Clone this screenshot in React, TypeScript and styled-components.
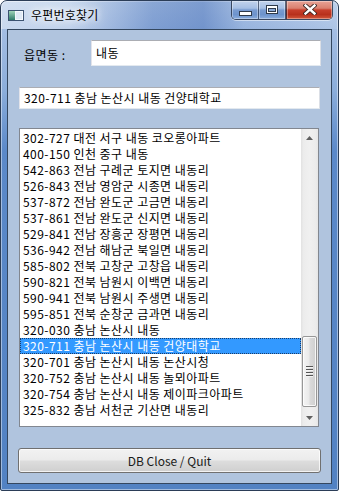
import React from 'react';
import styled, { createGlobalStyle } from 'styled-components';

const GlobalStyle = createGlobalStyle`
  html, body {
    margin: 0;
    padding: 0;
    background: #ffffff;
  }
  body {
    font-family: "Noto Sans CJK KR", "Noto Sans", sans-serif;
    font-size: 12px;
    color: #000;
  }
`;

const Window = styled.div`
  width: 339px;
  height: 491px;
  box-sizing: border-box;
  border: 1px solid #2b3d57;
  border-radius: 7px 7px 2px 2px;
  background: linear-gradient(180deg, #b5cbe8 0%, #a3bde3 30px, #8badda 90px, #5b89c9 150px, #5282c3 100%);
  box-shadow: inset 0 0 0 1px rgba(255, 255, 255, 0.45);
  display: flex;
  flex-direction: column;
  overflow: hidden;
`;

const TitleBar = styled.div`
  height: 28px;
  display: flex;
  align-items: flex-start;
  padding: 0 5px 0 7px;
  background: linear-gradient(90deg,
    rgba(255, 255, 255, 0.4) 0%,
    rgba(255, 255, 255, 0.3) 20%,
    rgba(40, 85, 170, 0.3) 45%,
    rgba(40, 85, 170, 0.4) 60%,
    rgba(80, 120, 190, 0.15) 72%,
    rgba(255, 255, 255, 0.1) 100%);
`;

const AppIcon = styled.svg`
  margin-top: 9px;
  flex: none;
`;

const Title = styled.span`
  margin: 5px 0 0 7px;
  line-height: 18px;
  font-size: 12px;
  letter-spacing: 0.2px;
  color: #000;
  text-shadow: 0 0 6px #fff, 0 0 10px #fff, 0 0 14px rgba(255, 255, 255, 0.9);
`;

const Spacer = styled.div`
  flex: 1;
`;

const CaptionGroup = styled.div`
  display: flex;
  height: 18px;
  border: 1px solid rgba(25, 35, 55, 0.75);
  border-top: none;
  border-radius: 0 0 5px 5px;
  overflow: hidden;
  box-shadow: 0 1px 0 rgba(255, 255, 255, 0.5);
`;

const CaptionButton = styled.div<{ $close?: boolean; $w: number }>`
  width: ${p => p.$w}px;
  height: 100%;
  display: flex;
  align-items: center;
  justify-content: center;
  box-sizing: border-box;
  border-left: ${p => (p.$close ? '1px solid rgba(25, 35, 55, 0.6)' : 'none')};
  border-right: ${p => (p.$close ? 'none' : '1px solid rgba(25, 35, 55, 0.6)')};
  box-shadow: inset 0 0 0 1px rgba(255, 255, 255, 0.35);
  background: ${p =>
    p.$close
      ? 'linear-gradient(180deg, #e8a396 0%, #d9806f 40%, #c73f2c 50%, #b8301c 75%, #d2583c 100%)'
      : 'linear-gradient(180deg, #c2d3ec 0%, #a6bfe4 40%, #789bd0 50%, #6d93cc 75%, #8aaddd 100%)'};
`;

const Client = styled.div`
  margin: 0 6px;
  height: 455px;
  box-sizing: border-box;
  border: 1px solid #34475f;
  background: #b0c4de;
  display: flex;
  flex-direction: column;
`;

const SearchRow = styled.div`
  display: flex;
  align-items: center;
  margin-top: 10px;
  height: 26px;
`;

const Label = styled.span`
  width: 83px;
  box-sizing: border-box;
  padding: 4px 0 0 16px;
  font-size: 12px;
  letter-spacing: 0.5px;
  line-height: 16px;
`;

const TextBox = styled.div<{ $w: number; $h: number }>`
  width: ${p => p.$w}px;
  height: ${p => p.$h}px;
  box-sizing: border-box;
  border: 1px solid;
  border-color: #abadb3 #dbdfe6 #e3e9ef #e2e3ea;
  background: #fff;
  padding: 0 4px;
  display: flex;
  align-items: center;
  font-size: 12px;
  letter-spacing: 0.45px;
  line-height: 16px;
  white-space: nowrap;
`;

const ResultBox = styled(TextBox)`
  margin: 21px 0 0 11px;
`;

const ListBox = styled.div`
  margin: 19px 0 0 11px;
  width: 300px;
  height: 299px;
  box-sizing: border-box;
  border: 1px solid #828790;
  background: #fff;
  display: flex;
`;

const Items = styled.div`
  flex: 1;
  padding-top: 1px;
  overflow: hidden;
`;

const Item = styled.div<{ $selected?: boolean }>`
  height: 16px;
  line-height: 16px;
  padding-left: 3px;
  white-space: nowrap;
  font-size: 12px;
  letter-spacing: 0.45px;
  color: ${p => (p.$selected ? '#fff' : '#000')};
  background: ${p => (p.$selected ? '#3399ff' : 'transparent')};
  outline: ${p => (p.$selected ? '1px dotted #1c3c66' : 'none')};
  outline-offset: -1px;
`;

const ScrollBar = styled.div`
  width: 17px;
  display: flex;
  flex-direction: column;
  background: linear-gradient(90deg, #e2e2e2 0%, #ececec 15%, #f0f0f0 50%, #ececec 85%, #e6e6e6 100%);
`;

const ArrowButton = styled.div`
  height: 17px;
  display: flex;
  align-items: center;
  justify-content: center;
`;

const Track = styled.div`
  flex: 1;
  display: flex;
  flex-direction: column;
  justify-content: flex-end;
  padding-bottom: 2px;
`;

const Thumb = styled.div`
  margin-left: 1px;
  width: 15px;
  height: 71px;
  box-sizing: border-box;
  border: 1px solid #979797;
  border-radius: 2px;
  background: linear-gradient(90deg, #f4f4f4 0%, #eaeaea 45%, #dadada 55%, #cfcfcf 100%);
  box-shadow: inset 0 0 0 1px rgba(255, 255, 255, 0.8);
  display: flex;
  flex-direction: column;
  align-items: center;
  justify-content: center;
  gap: 1px;
`;

const Grip = styled.div`
  width: 7px;
  height: 1px;
  background: #555;
  border-bottom: 1px solid #f4f4f4;
`;

const QuitButton = styled.button`
  margin: 21px 0 0 10px;
  width: 303px;
  height: 25px;
  box-sizing: border-box;
  border: 1px solid #707070;
  border-radius: 3px;
  background: linear-gradient(180deg, #f2f2f2 0%, #ebebeb 48%, #dddddd 52%, #cfcfcf 100%);
  box-shadow: inset 0 0 0 1px rgba(255, 255, 255, 0.75);
  font-family: "Noto Sans CJK KR", "Noto Sans", sans-serif;
  font-size: 12px;
  color: #1a1a1a;
  padding: 0;
`;

const rows = [
  '302-727 대전 서구 내동 코오롱아파트',
  '400-150 인천 중구 내동',
  '542-863 전남 구례군 토지면 내동리',
  '526-843 전남 영암군 시종면 내동리',
  '537-872 전남 완도군 고금면 내동리',
  '537-861 전남 완도군 신지면 내동리',
  '529-841 전남 장흥군 장평면 내동리',
  '536-942 전남 해남군 북일면 내동리',
  '585-802 전북 고창군 고창읍 내동리',
  '590-821 전북 남원시 이백면 내동리',
  '590-941 전북 남원시 주생면 내동리',
  '595-851 전북 순창군 금과면 내동리',
  '320-030 충남 논산시 내동',
  '320-711 충남 논산시 내동 건양대학교',
  '320-701 충남 논산시 내동 논산시청',
  '320-752 충남 논산시 내동 놀뫼아파트',
  '320-754 충남 논산시 내동 제이파크아파트',
  '325-832 충남 서천군 기산면 내동리',
];

const selectedIndex = 13;

export default function App() {
  return (
    <>
      <GlobalStyle />
      <Window>
        <TitleBar>
          <AppIcon width="16" height="11" viewBox="0 0 16 11">
            <defs>
              <linearGradient id="pane" x1="0" y1="0" x2="0" y2="1">
                <stop offset="0" stopColor="#9fd3b8" />
                <stop offset="1" stopColor="#2f7a6a" />
              </linearGradient>
            </defs>
            <rect x="0.5" y="0.5" width="15" height="10" fill="#f4f8fc" stroke="#3b5270" />
            <rect x="1" y="1" width="6" height="9" fill="url(#pane)" />
            <rect x="8" y="2" width="6" height="7" fill="#dfe9f5" />
          </AppIcon>
          <Title>우편번호찾기</Title>
          <Spacer />
          <CaptionGroup>
            <CaptionButton $w={27}>
              <svg width="13" height="5" viewBox="0 0 13 5" style={{ marginTop: 6 }}>
                <rect x="0.5" y="0.5" width="12" height="4" fill="#fff" stroke="#2f3a4a" />
              </svg>
            </CaptionButton>
            <CaptionButton $w={27}>
              <svg width="12" height="9" viewBox="0 0 12 9" style={{ marginTop: -2 }}>
                <rect x="0.5" y="0.5" width="11" height="8" fill="#fff" stroke="#2f3a4a" />
                <rect x="2.5" y="3.5" width="7" height="3" fill="#8aa8d6" stroke="#2f3a4a" />
              </svg>
            </CaptionButton>
            <CaptionButton $w={46} $close>
              <svg width="14" height="11" viewBox="0 0 14 11" style={{ marginTop: -1 }}>
                <path d="M2.5 1.5 L11.5 9.5 M11.5 1.5 L2.5 9.5" stroke="#3a2420" strokeWidth="4.2" strokeLinecap="square" />
                <path d="M2.5 1.5 L11.5 9.5 M11.5 1.5 L2.5 9.5" stroke="#fff" strokeWidth="2.4" strokeLinecap="square" />
              </svg>
            </CaptionButton>
          </CaptionGroup>
        </TitleBar>
        <Client>
          <SearchRow>
            <Label>읍면동 :</Label>
            <TextBox $w={230} $h={26}>내동</TextBox>
          </SearchRow>
          <ResultBox $w={301} $h={22}>320-711 충남 논산시 내동 건양대학교</ResultBox>
          <ListBox>
            <Items>
              {rows.map((r, i) => (
                <Item key={r} $selected={i === selectedIndex}>{r}</Item>
              ))}
            </Items>
            <ScrollBar>
              <ArrowButton>
                <svg width="7" height="4" viewBox="0 0 7 4">
                  <path d="M0 4 L3.5 0 L7 4 Z" fill="#606060" />
                </svg>
              </ArrowButton>
              <Track>
                <Thumb>
                  <Grip />
                  <Grip />
                  <Grip />
                  <Grip />
                </Thumb>
              </Track>
              <ArrowButton>
                <svg width="7" height="4" viewBox="0 0 7 4">
                  <path d="M0 0 L3.5 4 L7 0 Z" fill="#606060" />
                </svg>
              </ArrowButton>
            </ScrollBar>
          </ListBox>
          <QuitButton>DB Close / Quit</QuitButton>
        </Client>
      </Window>
    </>
  );
}
